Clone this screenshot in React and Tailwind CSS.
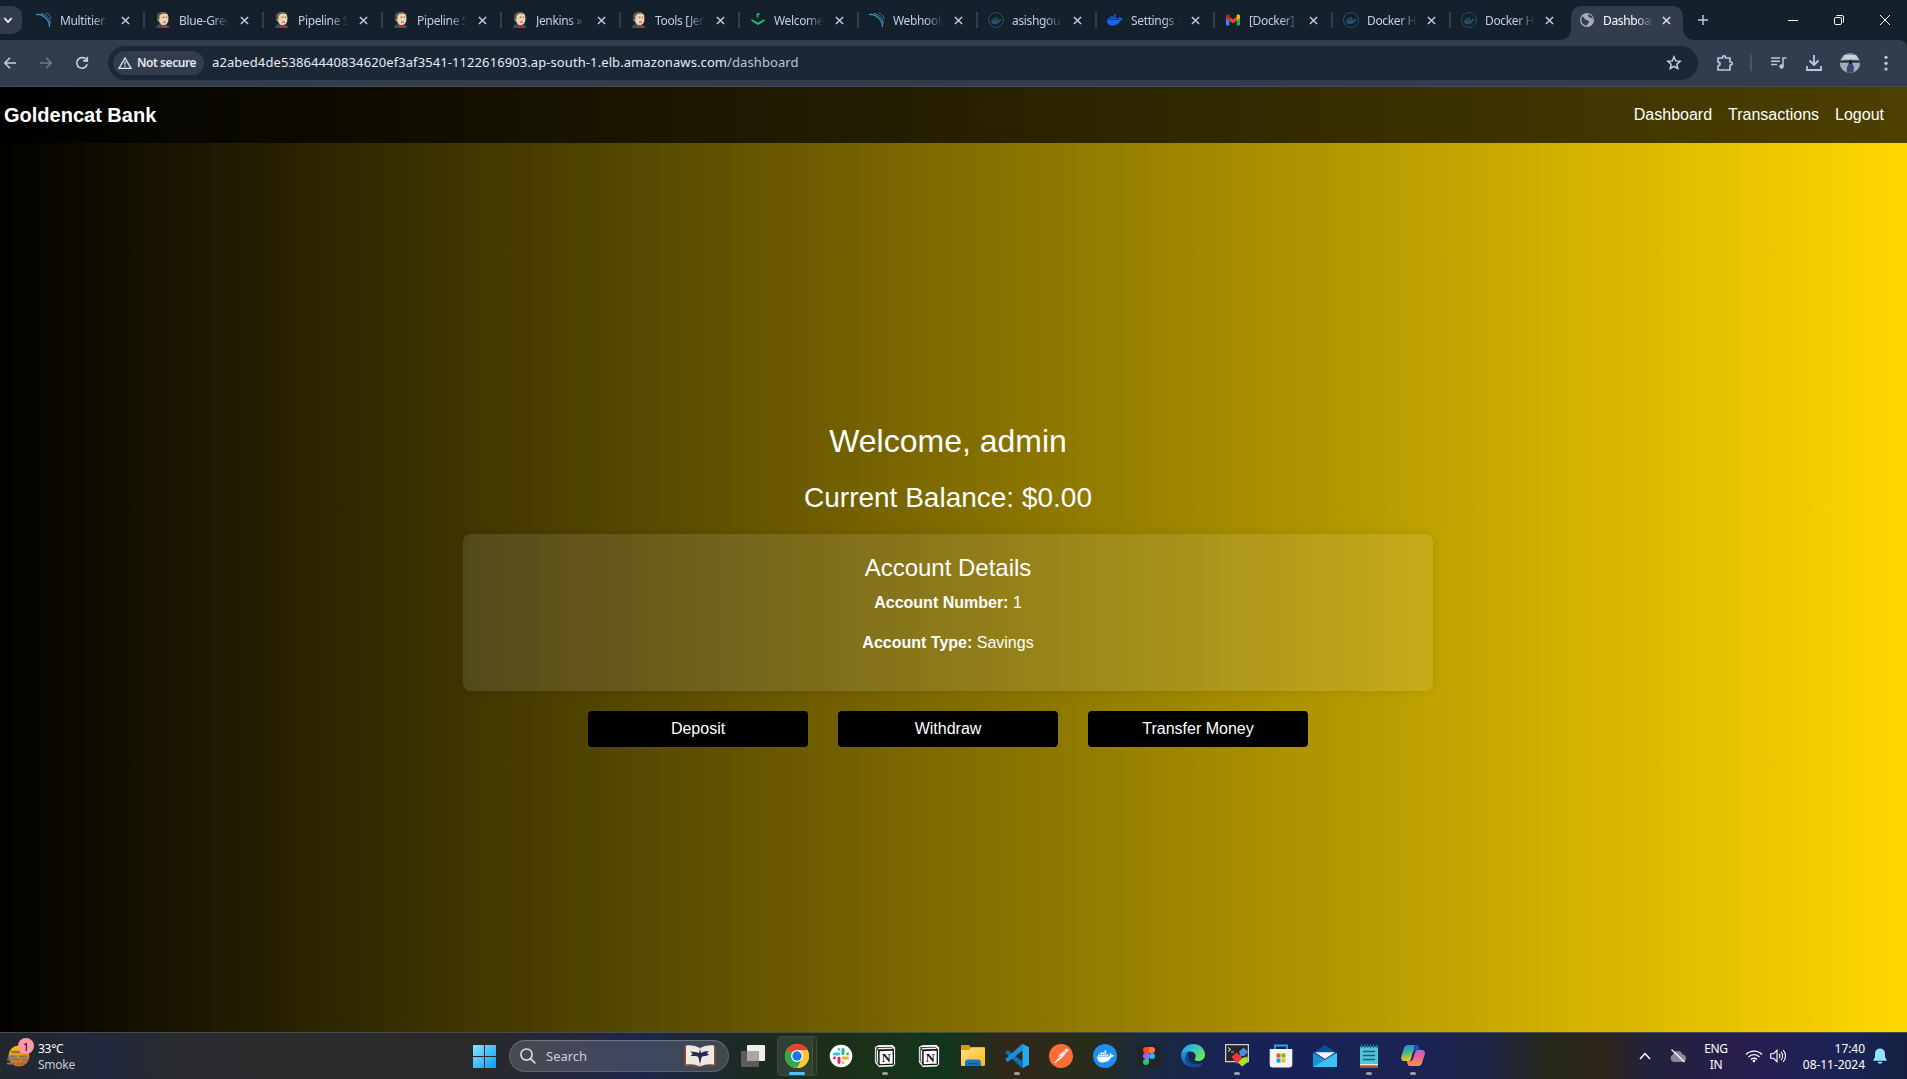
import React from "react";
import { FaDocker } from "react-icons/fa";
import { SiPostman } from "react-icons/si";

const UI = "font-['Noto_Sans','Open_Sans',sans-serif]";

/* ---------- Tab favicons ---------- */
const Sonar = () => (
  <svg viewBox="0 0 16 16" className="h-4 w-4" fill="none" stroke="#3f8fc0" strokeLinecap="round">
    <path d="M.5 2.5C7 2 13.500 7.500 13.500 14.500" strokeWidth="1.300" />
    <path d="M5.500 1.500C10 2.500 14 6.500 14.500 11" strokeWidth="1" />
    <path d="M10 .8c2.500 1.200 4.500 3.200 5.300 5.700" strokeWidth=".8" />
  </svg>
);
const Jenkins = () => (
  <svg viewBox="0 0 16 16" className="h-4 w-4">
    <path d="M1 16c0-2.500 1.500-3.500 4-4l5 .5c2.500.5 4.500 1 4.500 3.500z" fill="#33505f" />
    <path d="M2.200 6C1.800 2 4.500.3 8.200.3S13.800 3 13.400 7c0 3.500-1.500 6-4.400 6C5.200 13 4.200 11 3.600 9 2.600 9 2 7.500 2.200 6z" fill="#efd2ae" />
    <path d="M2 7.200C1.300 3 4 .3 8 .3c1.800 0 3.500.5 4.300 1.700C9.500 1 5.600 1.300 4.500 4c-.2 1.200.2 3-.4 3.800-.5.300-1.600 0-2.100-.6z" fill="#55514d" />
    <path d="M7.600 5.200h1.800M10.800 5.200h1.400M8 9.800c1 .6 2 .5 3 0M3.700 8.500c.4 2 1.200 3.200 2.200 4" stroke="#5b4a3e" strokeWidth=".9" fill="none" />
    <path d="M6 13l2.700 1 3-1 .3 3-3.300-1L6 16z" fill="#d3272d" />
  </svg>
);
const Welcome = () => (
  <svg viewBox="0 0 16 16" className="h-4 w-4" fill="none" stroke="#12c76c">
    <path d="M1.500 8L8 11.800 14.500 8" strokeWidth="1.900" />
    <path d="M7.500 5.500V2h2.200" strokeWidth="1.500" />
  </svg>
);
const DockerRing = () => (
  <span className="flex h-4 w-4 items-center justify-center rounded-full border border-[#245069]">
    <FaDocker className="h-[11px] w-[11px] text-[#28536b]" />
  </span>
);
const DockerBlue = () => <FaDocker className="h-4 w-4 text-[#1d63ed]" />;
const Gmail = () => (
  <svg viewBox="0 0 16 16" className="h-4 w-4">
    <path d="M1 4v8.500q0 1 1 1h2.300V7z" fill="#4285f4" />
    <path d="M15 4v8.500q0 1-1 1h-2.300V7z" fill="#34a853" />
    <path d="M4.300 4.500L8 7.400l3.700-2.900V8.600L8 11.500 4.300 8.600z" fill="#ea4335" />
    <path d="M1 4c0-1.600 1.700-2 2.800-1.200l.5.400v5.400L1 6z" fill="#c5221f" />
    <path d="M15 4c0-1.600-1.700-2-2.800-1.200l-.5.400v5.400L15 6z" fill="#fbbc04" />
  </svg>
);
const Globe = () => (
  <svg viewBox="0 0 16 16" className="h-4 w-4">
    <circle cx="8" cy="8" r="7" fill="#a9adb3" />
    <path d="M3 4.500c1.500 0 2.500 1 2.500 2.300 0 1 1.500.7 2.500 1.200s2.500 1 1.800 2.700c-.4 1-1.800.8-2 2.800-3-.5-5-2-5.500-4.700zM8.500 2.500c1.500 1 .5 2.500 2 3s3 .3 3.500 2c0-2.500-1.500-5-5.500-5z" fill="#323c4d" />
  </svg>
);

const CloseX = ({ className = "" }) => (
  <svg viewBox="0 0 10 10" className={`h-[9px] w-[9px] shrink-0 ${className}`} fill="none" stroke="currentColor" strokeWidth="1.600">
    <path d="M1 1l8 8M9 1L1 9" />
  </svg>
);

const tabs = [
  { Icon: Sonar, t: "Multitier" },
  { Icon: Jenkins, t: "Blue-Green" },
  { Icon: Jenkins, t: "Pipeline Sy" },
  { Icon: Jenkins, t: "Pipeline Sy" },
  { Icon: Jenkins, t: "Jenkins »" },
  { Icon: Jenkins, t: "Tools [Jenk" },
  { Icon: Welcome, t: "Welcome t" },
  { Icon: Sonar, t: "Webhook" },
  { Icon: DockerRing, t: "asishgoud" },
  { Icon: DockerBlue, t: "Settings |", narrow: true },
  { Icon: Gmail, t: "[Docker] P", narrow: true },
  { Icon: DockerRing, t: "Docker Hu", narrow: true },
  { Icon: DockerRing, t: "Docker Hu", narrow: true },
];

function TabLabel({ children }) {
  return (
    <span className="w-[50px] overflow-hidden pt-px text-[12px] tracking-[-0.35px] whitespace-nowrap [mask-image:linear-gradient(to_right,#000_65%,transparent)]">
      {children}
    </span>
  );
}

function TabStrip() {
  return (
    <div className={`flex h-10 items-start bg-[#15202d] text-[#c3cede] ${UI}`}>
      <div className="mt-[6px] flex h-7 w-[22px] items-center justify-start rounded-r-[10px] bg-[#323c4d] pl-[3px] text-white">
        <svg viewBox="0 0 10 10" className="h-[10px] w-[10px]" fill="none" stroke="currentColor" strokeWidth="1.800">
          <path d="M1.300 3l3.700 4 3.700-4" />
        </svg>
      </div>
      <div className="ml-[4px] flex h-10 items-center">
        {tabs.map(({ Icon, t, narrow }, i) => (
          <div key={i} className={`flex h-4 items-center pl-[10px] ${narrow ? "w-[118px]" : "w-[119px]"}`}>
            <Icon />
            <span className="ml-2 flex"><TabLabel>{t}</TabLabel></span>
            <CloseX className={narrow ? "ml-[10px]" : "ml-[11px]"} />
            {i < tabs.length - 1 && <span className="ml-auto h-4 w-[2px] bg-[#323c4d]" />}
          </div>
        ))}
      </div>
      <div className="relative ml-[2px] mt-[6px] flex h-[34px] w-[112px] items-center rounded-t-[10px] bg-[#323c4d] pb-[6px] pl-2 text-white">
        <span className="absolute bottom-0 -left-[10px] h-[10px] w-[10px] bg-[radial-gradient(circle_at_0_0,transparent_9.500px,#323c4d_10px)]" />
        <span className="absolute -right-[10px] bottom-0 h-[10px] w-[10px] bg-[radial-gradient(circle_at_100%_0,transparent_9.500px,#323c4d_10px)]" />
        <Globe />
        <span className="ml-2 flex"><TabLabel>Dashboard</TabLabel></span>
        <CloseX className="ml-[9px] text-[#dfe4ec]" />
      </div>
      <div className="flex h-10 flex-1 items-center pl-[15px]">
        <svg viewBox="0 0 10 10" className="h-[10px] w-[10px]" stroke="currentColor" strokeWidth="1.400"><path d="M5 0v10M0 5h10" /></svg>
        <div className="mr-[17px] ml-auto flex items-center gap-9 text-white">
          <svg viewBox="0 0 10 10" className="h-[10px] w-[10px]" stroke="currentColor"><path d="M0 5.500h10" /></svg>
          <svg viewBox="0 0 10 10" className="h-[10px] w-[10px]" fill="none" stroke="currentColor"><rect x=".5" y="2.500" width="7" height="7" rx="1.300" /><path d="M2.500.5H8A1.500 1.500 0 0 1 9.500 2v5.500" /></svg>
          <svg viewBox="0 0 10 10" className="h-[10px] w-[10px]" fill="none" stroke="currentColor"><path d="M0 0l10 10M10 0L0 10" /></svg>
        </div>
      </div>
    </div>
  );
}

function AddressBar() {
  return (
    <div className="bg-[#15202d]">
      <div className={`flex h-[47px] items-center rounded-tr-[8px] border-b border-[#454d5b] bg-[#323c4d] text-[#a9b8cd] ${UI}`}>
        <svg viewBox="0 0 12 12" className="ml-1 h-3 w-3" fill="none" stroke="#c3cfe0" strokeWidth="1.600"><path d="M12 6H1M6 .8L.9 6 6 11.200" /></svg>
        <svg viewBox="0 0 12 12" className="ml-6 h-3 w-3" fill="none" stroke="#6f7a8a" strokeWidth="1.600"><path d="M0 6h11M6 .8L11.100 6 6 11.200" /></svg>
        <svg viewBox="0 0 14 14" className="ml-[23px] h-[14px] w-[14px]" fill="none" stroke="#c3cfe0" strokeWidth="1.600"><path d="M12.200 8.300A5.300 5.300 0 1 1 11.500 4" /><path d="M12.300.8v4.100H8.200" /></svg>
        <div className="ml-[19px] flex h-[34px] w-[1590px] items-center rounded-full bg-[#1c2736] pl-[5px]">
          <div className="flex h-6 w-[91px] items-center rounded-full bg-[#323c4d] pl-[5px] text-[#e4e8ee]">
            <svg viewBox="0 0 14 12" className="h-3 w-[14px]" fill="none" stroke="currentColor" strokeWidth="1.300"><path d="M7 1L13 11.300H1zM7 4.500v3.200M7 8.700v1.300" /></svg>
            <span className="ml-[5px] text-[12px] font-semibold tracking-[-0.45px] whitespace-nowrap">Not secure</span>
          </div>
          <span className="ml-2 text-[13px] tracking-[0.087px] whitespace-nowrap text-[#e8ebf0]">
            a2abed4de53864440834620ef3af3541-1122616903.ap-south-1.elb.amazonaws.com<span className="text-[#bcc5d2]">/dashboard</span>
          </span>
          <svg viewBox="0 0 16 16" className="mr-[16px] ml-auto h-4 w-4" fill="none" stroke="#d0d7e2" strokeWidth="1.400"><path d="M8 1.800l1.700 4.100 4.500.4-3.400 2.900 1 4.400L8 11.300l-3.800 2.300 1-4.400L1.800 6.300l4.500-.4z" /></svg>
        </div>
        <svg viewBox="0 0 18 18" className="ml-[18px] h-[18px] w-[18px]" fill="none" stroke="#b9c8e0" strokeWidth="1.700" strokeLinejoin="round"><path d="M2 4h4.500V3.300a1.500 1.500 0 0 1 3 0V4H14v4h.8a1.500 1.500 0 0 1 0 3H14v5H2v-4.200c2.800-.4 2.800-3.200 0-3.600z" /></svg>
        <span className="ml-[16px] h-4 w-[2px] bg-[#4b5667]" />
        <svg viewBox="0 0 16 14" className="ml-[19px] h-[14px] w-4" fill="none" stroke="#b9c8e0" strokeWidth="1.500"><path d="M0 2h9M0 5.200h9M0 8.400h6M12 10V2h3.500" /><circle cx="10.500" cy="10.500" r="2.200" fill="#b9c8e0" stroke="none" /></svg>
        <svg viewBox="0 0 16 16" className="ml-[19px] h-4 w-4" fill="none" stroke="#b9c8e0" strokeWidth="1.800"><path d="M8 0v9.500M3.500 5.500L8 10l4.500-4.500M1 11v4h14v-4" /></svg>
        <svg viewBox="0 0 20 20" className="ml-[18px] h-5 w-5">
          <defs><clipPath id="av"><circle cx="10" cy="10" r="10" /></clipPath></defs>
          <g clipPath="url(#av)">
            <path fill="#8796a8" d="M0 0h20v20H0z" /><path fill="#c6d0d8" d="M3 2h14v2l2 2.500H1L4 4z" />
            <path fill="#1c252b" d="M0 8l5-.6h10l5 .6v1.700H0z" /><path fill="#a3adb6" d="M0 9.700h20V20H0z" />
            <path fill="#20242f" d="M8.800 7.800q1.700-1.500 3.400 0v3.500H8.800z" /><path fill="#384772" d="M8.500 11h4l1.500 3-.5 6h-7l.5-6z" />
          </g>
        </svg>
        <svg viewBox="0 0 4 16" className="ml-6 h-4 w-1" fill="#c3cfe0"><circle cx="2" cy="2.300" r="1.600" /><circle cx="2" cy="8.300" r="1.600" /><circle cx="2" cy="14" r="1.600" /></svg>
      </div>
    </div>
  );
}

/* ---------- Bank page ---------- */
function BankPage() {
  return (
    <div className="-ml-3 flex h-[945px] w-[1920px] flex-col bg-[linear-gradient(to_right,#000000,#ffd700)] font-['Liberation_Sans',Arial,sans-serif] text-white">
      <nav className="flex h-14 items-center justify-between bg-black/70 pr-6 pl-4">
        <span className="text-[20px] font-bold">Goldencat Bank</span>
        <div className="flex gap-4 text-base">
          <span>Dashboard</span><span>Transactions</span><span>Logout</span>
        </div>
      </nav>
      <main className="flex flex-1 flex-col items-center pt-[279px] text-center">
        <h1 className="text-[32px] leading-[38px]">Welcome, admin</h1>
        <h2 className="mt-[21px] text-[28px] leading-[34px]">Current Balance: $0.00</h2>
        <section className="mt-[19px] h-[157px] w-[970px] rounded-[8px] bg-white/10 pt-[19px] shadow-[0_0_10px_rgba(0,0,0,0.1)]">
          <h3 className="text-[24px] leading-[29px]">Account Details</h3>
          <p className="mt-[9px] text-base leading-6"><b>Account Number:</b> 1</p>
          <p className="mt-4 text-base leading-6"><b>Account Type:</b> Savings</p>
        </section>
        <div className="mt-5 flex gap-[30px]">
          {["Deposit", "Withdraw", "Transfer Money"].map((b) => (
            <button key={b} className="h-9 w-[220px] rounded-[4px] bg-black pb-px text-base">{b}</button>
          ))}
        </div>
      </main>
    </div>
  );
}

/* ---------- Taskbar icons ---------- */
const S = ({ children, box = 24 }) => <svg viewBox={`0 0 ${box} ${box}`} className="h-6 w-6">{children}</svg>;

const Chrome = () => (
  <S>
    <circle cx="12" cy="12" r="12" fill="#fcc934" />
    <path d="M12 12L1.600 6A12 12 0 0 1 22.400 6z" fill="#ea4335" />
    <path d="M12 0A12 12 0 0 1 22.400 6H12z" fill="#ea4335" />
    <path d="M1.600 6A12 12 0 0 0 12 24L17.200 15 12 12z" fill="#2da94f" />
    <path d="M17.200 15L12 24A12 12 0 0 0 22.400 6H12z" fill="#fcc934" />
    <circle cx="12" cy="12" r="6" fill="#fff" /><circle cx="12" cy="12" r="4.700" fill="#1a73e8" />
  </S>
);
const Slack = () => (
  <S>
    <circle cx="12" cy="12" r="11.300" fill="#fff" />
    <g strokeWidth="2.900" strokeLinecap="round">
      <path d="M10 5.400v.01M5.400 10h4.400" stroke="#36c5f0" /><path d="M14 5.400v4.400M18.600 10h.01" stroke="#2eb67d" />
      <path d="M14 18.600v.01M14.200 14h4.400" stroke="#ecb22e" /><path d="M10 14.200v4.400M5.400 14h.01" stroke="#e01e5a" />
    </g>
  </S>
);
const Notion = () => (
  <S>
    <path d="M2.500 3.500l3-1.700L19 1.500l2.500 2.200V20l-2 1.800L6 22.300 2.500 18z" fill="#fff" stroke="#fff" strokeWidth="1.200" strokeLinejoin="round" />
    <path d="M3.500 3.600L6 6l14.500-.6-2-2.200zM3.300 4.800V17.500L5.800 20.300V6.800z" fill="#eee" stroke="#111" strokeWidth=".8" />
    <path d="M6 6.500l14.300-.6v14.300L6 20.800z" fill="#fff" stroke="#111" strokeWidth="1.300" />
    <text x="13.200" y="18" textAnchor="middle" fontSize="12.500" fontWeight="700" fontFamily="Liberation Serif, serif" fill="#111">N</text>
  </S>
);
const Folder = () => (
  <S>
    <path d="M0 2q0-1 1-1h7l2 2.500h13q1 0 1 1V10H0z" fill="#d99a0b" />
    <path d="M0 6h8l2.500-2.700H23q1 0 1 1V21q0 1-1 1H1q-1 0-1-1z" fill="url(#fold)" />
    <path d="M4 22v-3.500Q4 15.500 7 15.500h10q3 0 3 3V22z" fill="#1975c5" /><path d="M7 19h10v1.300H7z" fill="#0a5394" />
    <defs><linearGradient id="fold" x2="1" y2="1"><stop stopColor="#ffe08a" /><stop offset="1" stopColor="#fdb913" /></linearGradient></defs>
  </S>
);
const VSCode = () => (
  <S>
    <path d="M17.500 0L24 3v18l-6.500 3z" fill="#24a9f2" />
    <path d="M.5 8.200L2.200 6.500q.6-.4 1.200 0L18 17.800V24q-1 0-1.500-.6L.5 9z" fill="#0d73b8" />
    <path d="M.5 15.800l1.700 1.700q.6.400 1.200 0L18 6.200V0q-1 0-1.500.6L.5 15z" fill="#1b8fd8" />
  </S>
);
const Postman = () => (
  <span className="flex h-6 w-6 rounded-full bg-[radial-gradient(circle,#fff_60%,transparent_61%)]"><SiPostman className="h-6 w-6 text-[#ff6c37]" /></span>
);
const DockerApp = () => (
  <span className="flex h-6 w-6 items-center justify-center rounded-full bg-[#1d8ff0] text-white"><FaDocker className="h-[17px] w-[17px]" /></span>
);
const Figma = () => (
  <S>
    <rect width="24" height="24" rx="2" fill="#242427" />
    <path d="M12 3H9a3 3 0 0 0 0 6h3z" fill="#f24e1e" /><path d="M12 3h3a3 3 0 0 1 0 6h-3z" fill="#ff7262" />
    <path d="M12 9H9a3 3 0 0 0 0 6h3z" fill="#a259ff" /><circle cx="15" cy="12" r="3" fill="#1abcfe" />
    <path d="M12 15H9a3 3 0 1 0 3 3z" fill="#0acf83" />
  </S>
);
const Edge = () => (
  <S>
    <defs>
      <linearGradient id="e1" x2="1" y2=".6"><stop stopColor="#1a9fe0" /><stop offset=".5" stopColor="#35c1c8" /><stop offset="1" stopColor="#6de35a" /></linearGradient>
      <linearGradient id="e2" x2="0" y2="1"><stop stopColor="#1f9de4" /><stop offset="1" stopColor="#0c55ab" /></linearGradient>
    </defs>
    <path d="M0 11C1 4 6 0 12.300 0 19 0 24 5 24 10.500c0 4-3 6.500-6.500 6.500-3 0-4.500-1.500-3.500-2.800 2-3-.5-6.700-5-6.700-4.500 0-8 1.500-9 3.500z" fill="url(#e1)" />
    <path d="M0 11.500C1 8.500 4.500 7 8.500 7.300 5 9 4 13 6 17c2 3.500 5.500 5.300 10 5.500A12 12 0 0 1 0 11.500z" fill="url(#e2)" />
    <path d="M8.500 9.500C6 12 7 17 10.500 19c4 2.200 8.500 1.500 12-1.200-1.800 3.500-4.500 5-6.500 5.500-6 .5-11.500-3-12-8 0-3 2-5.200 4.500-5.800z" fill="#104b96" />
  </S>
);
const Terminal = () => (
  <S>
    <rect x=".6" y=".6" width="22.800" height="17" fill="#252525" stroke="#d0d0d0" strokeWidth="1.300" />
    <path d="M3 3.500L5.500 5.500 3 7.500" stroke="#fff" fill="none" /><path d="M6 8h3" stroke="#bbb" />
    <path d="M6.500 13l5-4.500 3 2.500 1.500-.5.500 2.500 1 2-5.500 5z" fill="#e8383c" />
    <path d="M14 7.500L18.500 3.500 23 8l-4.500 4.500-3-1z" fill="#5486e4" />
    <path d="M13 18.500l4.500-4.500 5-1.500.5 5.500-6 4.500z" fill="#a6e32b" />
  </S>
);
const Store = () => (
  <S>
    <path d="M6 6V1.500h12V6" fill="none" stroke="#27a8e8" strokeWidth="1.800" />
    <path d="M.7 5h22.600v15.500q0 3-3 3H3.700q-3 0-3-3z" fill="#f3f4f6" />
    <path d="M7.500 9.500h4v4h-4z" fill="#f25022" /><path d="M12.500 9.500h4v4h-4z" fill="#7fba00" /><path d="M7.500 14.500h4v4h-4z" fill="#00a4ef" /><path d="M12.500 14.500h4v4h-4z" fill="#ffb900" />
  </S>
);
const Mail = () => (
  <S>
    <path d="M0 9L12 1l12 8v4H0z" fill="#104f96" /><path d="M2 8.200h20L12 15z" fill="#f2f5f8" />
    <path d="M0 9l12 7L24 9v14H0z" fill="#32b4ec" /><path d="M0 23V9l15.500 9z" fill="#1c8fd6" /><path d="M0 23l24-14v14z" fill="#45c4f5" opacity=".8" />
  </S>
);
const Notepad = () => (
  <S>
    <path d="M3 2.500h18v19H3z" fill="#52c3d9" /><path d="M3 20h18v1.500H3z" fill="#e9eef0" /><path d="M3 21.700h18V24H3z" fill="#a7561d" />
    <path d="M4.500 0v4M7.500 0v4M10.500 0v4M13.500 0v4M16.500 0v4M19.500 0v4" stroke="#167287" strokeWidth="1.200" />
    <path d="M6 7.500h12M6 11.500h12M6 15.500h12" stroke="#116379" strokeWidth="1.300" />
  </S>
);
const Copilot = () => (
  <S>
    <defs>
      <linearGradient id="c1" x2=".2" y2="1"><stop stopColor="#1f82e8" /><stop offset=".5" stopColor="#41b98c" /><stop offset="1" stopColor="#f5c31c" /></linearGradient>
      <linearGradient id="c2" x2=".1" y2="1"><stop stopColor="#a55bea" /><stop offset=".5" stopColor="#ee609a" /><stop offset="1" stopColor="#f6924a" /></linearGradient>
    </defs>
    <path d="M7 1h8q2 0 2.500 2l1 3h-4q-2 0-2.600 2L10 15q-.6 2-2.500 2H3Q-.5 17 .3 12.500L3 4q1-3 4-3z" fill="url(#c1)" />
    <path d="M17 22H9q-2 0-2.500-2l-.7-3h3.500q2 0 2.600-2L14 8q.6-2 2.500-2H21q3.500 0 2.700 4.500L21 19q-1 3-4 3z" fill="url(#c2)" />
    <path d="M13 1h2q2 0 2.500 2l1 3h-4q-1 0-1.700.7z" fill="#174fc0" />
  </S>
);

const apps = [
  { I: Slack }, { I: Notion, dot: 1 }, { I: Notion }, { I: Folder }, { I: VSCode, dot: 1 }, { I: Postman }, { I: DockerApp },
  { I: Figma }, { I: Edge }, { I: Terminal, dot: 1 }, { I: Store }, { I: Mail }, { I: Notepad, dot: 1 }, { I: Copilot, dot: 1 },
];

function Taskbar() {
  return (
    <footer className={`flex h-[47px] items-center border-t border-[#4a4a4c] bg-[linear-gradient(to_right,#21282e_0px,#20283b_105px,#292b2e_175px,#2a2a2a_470px,#1e2648_645px,#1d2a20_760px,#1c3018_850px,#12351d_945px,#33281a_1010px,#272d1c_1090px,#1b2940_1150px,#182259_1240px,#1a2352_1430px,#1f2544_1490px,#262a1b_1550px,#2e2519_1600px,#22223a_1645px,#271d50_1750px,#1a2555_1850px,#141f40_1907px)] text-white ${UI}`}>
      <div className="flex w-[473px] items-center pl-[7px]">
        <div className="relative">
          <svg viewBox="0 0 24 24" className="h-6 w-6">
            <defs><linearGradient id="sun" x2=".3" y2="1"><stop stopColor="#ffd000" /><stop offset="1" stopColor="#e9600c" /></linearGradient></defs>
            <circle cx="12" cy="12" r="10.500" fill="url(#sun)" />
            <path d="M4 8h9M1 12.500h9M12 12.500h8M0 15.500h13M15 15.500h6M0 19.500h8M10 19.500h8" stroke="#777674" strokeWidth="1.800" />
          </svg>
          <span className="absolute -top-[6px] left-[11px] flex h-4 w-4 items-center justify-center rounded-full bg-[#ff99a4] text-[11px] leading-none text-black">1</span>
        </div>
        <div className="ml-[7px] pt-px text-[12px] leading-4 tracking-[-0.25px]"><div>33°C</div><div className="text-[#c7c9cb]">Smoke</div></div>
      </div>
      <svg viewBox="0 0 23 23" className="h-[23px] w-[23px]">
        <defs><linearGradient id="win" x2="1" y2="1"><stop stopColor="#8be2ff" /><stop offset="1" stopColor="#0c99f5" /></linearGradient></defs>
        <path d="M0 0h11v11H0zM12 0h11v11H12zM0 12h11v11H0zM12 12h11v11H12z" fill="url(#win)" />
      </svg>
      <div className="ml-[13px] flex h-8 w-[220px] items-center rounded-full border border-white/15 border-t-white/25 bg-white/15 pr-3 pl-[10px]">
        <svg viewBox="0 0 16 16" className="h-4 w-4" fill="none" stroke="#e6e6e8" strokeWidth="1.500" strokeLinecap="round"><circle cx="6.500" cy="6.500" r="5.600" /><path d="M10.600 10.600L15 15" /></svg>
        <span className="ml-[10px] pt-px text-[13px] text-[#cdced3]">Search</span>
        <svg viewBox="0 0 32 24" className="ml-auto h-6 w-8">
          <path d="M.5 2L2 1v20l13 1 2 1 13-2V1l1.500 1v20L18 23h-4L.5 22z" fill="#964b36" />
          <path d="M2 1.500q8-1 14 2.500 6-3.500 14-2.500v19q-8-1-14 2-6-3-14-2z" fill="#efe8e2" /><path d="M16 4v18" stroke="#bdb1ad" />
          <path d="M16 5.500l1 3.500 3-1.500 5-.500-2 2 2 2-3.500 1-3.500.5-1 3-.5 3h-1l-.5-3-1-3-3.500-.5L6.500 12l2-2-2-2.500 5 .5 3.500 1z" fill="#272c52" />
        </svg>
      </div>
      <svg viewBox="0 0 24 22" className="ml-3 h-[22px] w-6">
        <rect x="6" width="18" height="16" rx="1" fill="#eeeeee" /><rect y="6" width="18" height="16" rx="1" fill="#5c5c5c" /><path d="M6 6h12v10H6z" fill="#a8a8a8" />
      </svg>
      <div className="relative ml-3 flex h-10 w-[40px] items-center rounded-[4px] border border-white/10 bg-white/5">
        <div className="flex h-full w-[35px] items-center rounded-[4px] border-r border-white/10 bg-white/5 pl-[7px]"><span className="block h-6 w-6 shrink-0"><Chrome /></span></div>
        <span className="absolute bottom-0 left-[11px] h-[3px] w-4 rounded-full bg-[#4cc2ff]" />
      </div>
      <div className="ml-[2px] flex h-full">
        {apps.map(({ I, dot }, i) => (
          <div key={i} className="relative flex h-full w-11 items-center justify-center">
            <I />
            {dot && <span className="absolute bottom-[4px] left-[19px] h-[3px] w-[6px] rounded-full bg-[#9c9ca0]" />}
          </div>
        ))}
      </div>
      <div className="ml-auto flex items-center pr-5">
        <svg viewBox="0 0 12 8" className="h-2 w-3" fill="none" stroke="#fff" strokeWidth="1.500"><path d="M1 7l5-5.500L11 7" /></svg>
        <svg viewBox="0 0 18 14" className="ml-[18px] h-[14px] w-[18px]"><path d="M4.500 13a4 4 0 0 1-.5-7.500 5 5 0 0 1 9.500 0A3.800 3.800 0 0 1 14 13z" fill="#8b8798" /><path d="M2.500.5l13 12.500" stroke="#fff" strokeWidth="1.200" /></svg>
        <div className="ml-[17px] w-6 pt-[2px] text-center text-[12px] leading-4 tracking-[-0.3px]"><div>ENG</div><div>IN</div></div>
        <svg viewBox="0 0 18 14" className="ml-[17px] h-[14px] w-[18px]" fill="none" stroke="#fff" strokeWidth="1.300"><path d="M1 5.500a11 11 0 0 1 16 0M3.500 8a7.700 7.700 0 0 1 11 0M6 10.500a4.200 4.200 0 0 1 6 0" /><circle cx="9" cy="12" r="1.300" fill="#fff" stroke="none" /></svg>
        <svg viewBox="0 0 17 14" className="ml-[7px] h-[14px] w-[17px]" fill="none" stroke="#fff" strokeWidth="1.100"><path d="M.7 4.700h2.800L7 1.300v11.400L3.500 9.300H.7zM9 4.800a3.300 3.300 0 0 1 0 4.400M11 2.900a6 6 0 0 1 0 8.200M13.200 1.200a8.500 8.500 0 0 1 0 11.600" /></svg>
        <div className="ml-[13px] w-[65px] pt-px text-right text-[12px] leading-4 tracking-[-0.05px] whitespace-nowrap"><div>17:40</div><div>08-11-2024</div></div>
        <svg viewBox="0 0 14 16" className="ml-2 h-4 w-[14px]" fill="#8fe4fb"><path d="M7 .5a5 5 0 0 1 5 5V9l1.700 3q.2.800-.6.800H.9q-.8 0-.6-.8L2 9V5.500a5 5 0 0 1 5-5zM4.700 13.700h4.600a2.300 2 0 0 1-4.600 0z" /></svg>
      </div>
    </footer>
  );
}

export default function App() {
  return (
    <div className="flex h-[1079px] w-[1907px] flex-col overflow-hidden bg-black">
      <TabStrip />
      <AddressBar />
      <BankPage />
      <Taskbar />
    </div>
  );
}
